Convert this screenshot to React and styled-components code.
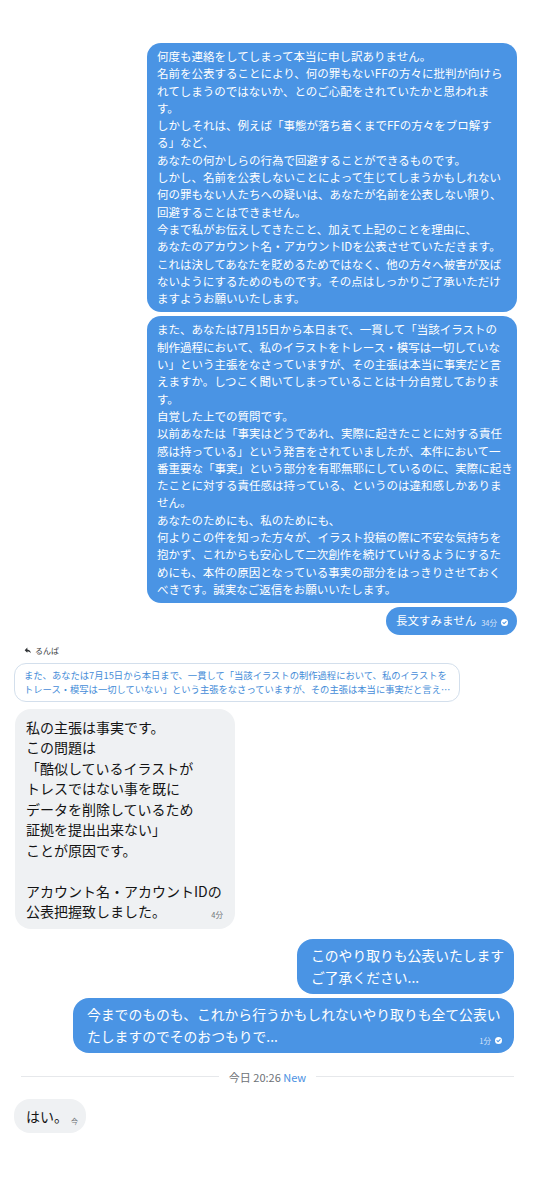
import React from 'react';
import styled, { createGlobalStyle } from 'styled-components';

const BLUE = '#4a94e4';
const FONT = '"Noto Sans CJK JP", "Noto Sans", sans-serif';

const GlobalStyle = createGlobalStyle`
  html, body { margin: 0; padding: 0; background: #ffffff; }
  body { font-family: ${FONT}; -webkit-font-smoothing: antialiased; }
`;

const Thread = styled.div`
  width: 552px;
  box-sizing: border-box;
  display: flex;
  flex-direction: column;
  padding: 43px 0 60px;
`;

const OutGroup = styled.div`
  display: flex;
  flex-direction: column;
  align-items: flex-end;
  gap: 4px;
  margin-right: ${p => p.$right}px;
  margin-top: ${p => p.$top || 0}px;
`;

const OutBubble = styled.div`
  box-sizing: border-box;
  width: ${p => (p.$width ? `${p.$width}px` : 'auto')};
  background: ${BLUE};
  color: #ffffff;
  border-radius: ${p => (p.$large ? '16px' : '14px')};
  font-size: ${p => (p.$large ? '13.8px' : '11.5px')};
  line-height: ${p => (p.$large ? '22px' : '17.3px')};
  padding: ${p => (p.$large ? '5px 12px 6px 14px' : '5px 9px 5px 10px')};
`;

const Line = styled.span`
  display: block;
  white-space: nowrap;
  min-height: 1em;
`;

const MetaLine = styled.span`
  display: flex;
  align-items: baseline;
  justify-content: space-between;
  white-space: nowrap;
  gap: 5px;
`;

const InlineRow = styled.span`
  display: flex;
  align-items: baseline;
  white-space: nowrap;
  gap: ${p => p.$gap || 6}px;
`;

const Meta = styled.span`
  display: inline-flex;
  align-items: center;
  gap: 4px;
  font-size: ${p => p.$size || 7.5}px;
  line-height: 1;
  color: ${p => (p.$light ? 'rgba(255,255,255,0.78)' : '#6f7478')};
  transform: translateY(${p => p.$shift || 0}px);
`;

const ReplyLabel = styled.div`
  display: flex;
  align-items: center;
  gap: 3px;
  margin: 10px 0 0 24px;
  font-size: 8px;
  line-height: 12px;
  color: #3a3d40;
`;

const Quote = styled.div`
  box-sizing: border-box;
  width: 446px;
  margin: 6px 0 0 14px;
  padding: 4px 8px 5px 9px;
  border: 1px solid #d3dfec;
  border-radius: 12px;
  color: #458cd8;
  font-size: 9.3px;
  line-height: 14px;
`;

const InBubble = styled.div`
  box-sizing: border-box;
  align-self: flex-start;
  width: ${p => (p.$width ? `${p.$width}px` : 'auto')};
  margin: ${p => p.$top}px 0 0 ${p => p.$left}px;
  background: #eff1f3;
  color: #141414;
  border-radius: 16px;
  font-size: 14px;
  line-height: ${p => p.$lh || 20.5}px;
  padding: ${p => p.$pad};
`;

const Divider = styled.div`
  display: flex;
  align-items: center;
  gap: 10px;
  margin: 17px 38px 0 21px;
  font-size: 11px;
  line-height: 14px;
  color: #6d7176;
  white-space: nowrap;
  &::before, &::after {
    content: '';
    flex: 1;
    height: 1px;
    background: #e6e8eb;
  }
`;

const NewTag = styled.span`
  color: #4a90e2;
`;

const CheckIcon = () => (
  <svg width="7" height="7" viewBox="0 0 10 10" aria-hidden="true">
    <circle cx="5" cy="5" r="5" fill="#ffffff" />
    <path d="M2.8 5.2 L4.4 6.7 L7.3 3.6" fill="none" stroke={BLUE} strokeWidth="1.5" strokeLinecap="round" strokeLinejoin="round" />
  </svg>
);

const ReplyIcon = () => (
  <svg width="8" height="7" viewBox="0 0 24 20" aria-hidden="true">
    <path d="M10 5V1L2 9l8 8v-4.1c5 0 8.5 1.6 11 5.1-1-5-4-10-11-11z" fill="#2f3235" />
  </svg>
);

const msg1 = [
  '何度も連絡をしてしまって本当に申し訳ありません。',
  '名前を公表することにより、何の罪もないFFの方々に批判が向けら',
  'れてしまうのではないか、とのご心配をされていたかと思われま',
  'す。',
  'しかしそれは、例えば「事態が落ち着くまでFFの方々をブロ解す',
  'る」など、',
  'あなたの何かしらの行為で回避することができるものです。',
  'しかし、名前を公表しないことによって生じてしまうかもしれない',
  '何の罪もない人たちへの疑いは、あなたが名前を公表しない限り、',
  '回避することはできません。',
  '今まで私がお伝えしてきたこと、加えて上記のことを理由に、',
  'あなたのアカウント名・アカウントIDを公表させていただきます。',
  'これは決してあなたを貶めるためではなく、他の方々へ被害が及ば',
  'ないようにするためのものです。その点はしっかりご了承いただけ',
  'ますようお願いいたします。',
];

const msg2 = [
  'また、あなたは7月15日から本日まで、一貫して「当該イラストの',
  '制作過程において、私のイラストをトレース・模写は一切していな',
  'い」という主張をなさっていますが、その主張は本当に事実だと言',
  'えますか。しつこく聞いてしまっていることは十分自覚しておりま',
  'す。',
  '自覚した上での質問です。',
  '以前あなたは「事実はどうであれ、実際に起きたことに対する責任',
  '感は持っている」という発言をされていましたが、本件において一',
  '番重要な「事実」という部分を有耶無耶にしているのに、実際に起き',
  'たことに対する責任感は持っている、というのは違和感しかありま',
  'せん。',
  'あなたのためにも、私のためにも、',
  '何よりこの件を知った方々が、イラスト投稿の際に不安な気持ちを',
  '抱かず、これからも安心して二次創作を続けていけるようにするた',
  'めにも、本件の原因となっている事実の部分をはっきりさせておく',
  'べきです。誠実なご返信をお願いいたします。',
];

const quoteLines = [
  'また、あなたは7月15日から本日まで、一貫して「当該イラストの制作過程において、私のイラストを',
  'トレース・模写は一切していない」という主張をなさっていますが、その主張は本当に事実だと言え…',
];

const reply = [
  '私の主張は事実です。',
  'この問題は',
  '「酷似しているイラストが',
  'トレスではない事を既に',
  'データを削除しているため',
  '証拠を提出出来ない」',
  'ことが原因です。',
  '',
  'アカウント名・アカウントIDの',
];

export default function App() {
  return (
    <>
      <GlobalStyle />
      <Thread>
        <OutGroup $right={35}>
          <OutBubble $width={370}>
            {msg1.map((t, i) => <Line key={i}>{t}</Line>)}
          </OutBubble>
          <OutBubble $width={370}>
            {msg2.map((t, i) => <Line key={i}>{t}</Line>)}
          </OutBubble>
          <OutBubble>
            <InlineRow $gap={5}>
              <span>長文すみません</span>
              <Meta $light $shift={1}>34分 <CheckIcon /></Meta>
            </InlineRow>
          </OutBubble>
        </OutGroup>

        <ReplyLabel>
          <ReplyIcon />
          <span>るんば</span>
        </ReplyLabel>
        <Quote>
          {quoteLines.map((t, i) => <Line key={i}>{t}</Line>)}
        </Quote>

        <InBubble $top={7} $left={15} $width={220} $pad="8px 12px 7px 11px">
          {reply.map((t, i) => <Line key={i}>{t || '\u00a0'}</Line>)}
          <MetaLine>
            <span>公表把握致しました。</span>
            <Meta $shift={1}>4分</Meta>
          </MetaLine>
        </InBubble>

        <OutGroup $right={38} $top={10}>
          <OutBubble $large $width={217}>
            <Line>このやり取りも公表いたします</Line>
            <Line>ご了承ください...</Line>
          </OutBubble>
          <OutBubble $large $width={441}>
            <Line>今までのものも、これから行うかもしれないやり取りも全て公表い</Line>
            <MetaLine>
              <span>たしますのでそのおつもりで...</span>
              <Meta $light $shift={2}>1分 <CheckIcon /></Meta>
            </MetaLine>
          </OutBubble>
        </OutGroup>

        <Divider>
          <span>今日 20:26 <NewTag>New</NewTag></span>
        </Divider>

        <InBubble $top={15} $left={14} $lh={20} $pad="7px 8px 7px 12px">
          <InlineRow $gap={3}>
            <span>はい。</span>
            <Meta $size={7} $shift={2}>今</Meta>
          </InlineRow>
        </InBubble>
      </Thread>
    </>
  );
}
